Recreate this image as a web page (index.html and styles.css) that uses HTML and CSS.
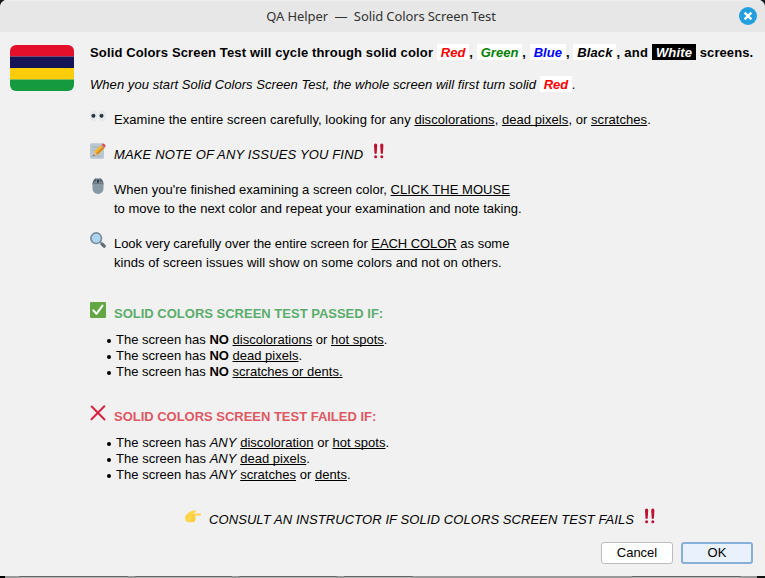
FILE: index.html
```html
<!DOCTYPE html>
<html lang="en">
<head>
<meta charset="utf-8">
<title>QA Helper — Solid Colors Screen Test</title>
<link rel="stylesheet" href="styles.css">
</head>
<body>
<svg class="defs" width="0" height="0" aria-hidden="true">
  <symbol id="bangs" viewBox="0 0 16 16"><path fill="#bb1133" d="M3 2.2Q3 .5 4.6.5T6.2 2.2L5.7 10.2Q5.5 11 4.6 11T3.5 10.2ZM9.2 2.2Q9.2.5 10.8.5T12.4 2.2L11.9 10.2Q11.7 11 10.8 11T9.7 10.2Z"/><circle cx="4.6" cy="13.8" r="1.5" fill="#bb1133"/><circle cx="10.8" cy="13.8" r="1.5" fill="#bb1133"/></symbol>
</svg>
<main class="dialog">
  <header class="titlebar">
    <h1>QA Helper &nbsp;—&nbsp; Solid Colors Screen Test</h1>
    <svg class="close" viewBox="0 0 18 18"><circle cx="9" cy="9" r="9" fill="#229fdd"/><path d="M5.6 5.6l6.8 6.8M12.4 5.6l-6.8 6.8" stroke="#fff" stroke-width="2.4"/></svg>
  </header>
  <div class="content">
    <svg class="flag" viewBox="0 0 64 46"><defs><clipPath id="round"><rect width="64" height="46" rx="6"/></clipPath></defs><g clip-path="url(#round)"><path fill="#e30f2b" d="M0 0h64v11.5H0z"/><path fill="#151456" d="M0 11.5h64V23H0z"/><path fill="#ffcd0a" d="M0 23h64v11.5H0z"/><path fill="#169a40" d="M0 34.5h64V46H0z"/></g></svg>
    <div class="message">
      <p class="lead"><span class="t-lead">Solid Colors Screen Test will cycle through solid color</span> <i class="chip red">Red</i>, <i class="chip green">Green</i>, <i class="chip blue">Blue</i>, <i class="chip black">Black</i><span class="t-and">, and </span><i class="chip white">White</i> screens.</p>
      <p class="start"><span class="t-start">When you start Solid Colors Screen Test, the whole screen will first turn solid</span> <b class="chip red">Red</b>.</p>
      <div class="row single">
        <svg class="icon" viewBox="0 0 16 16"><ellipse cx="3.8" cy="8" rx="3.7" ry="5.8" fill="#e5e9eb"/><ellipse cx="12.2" cy="8" rx="3.7" ry="5.8" fill="#e5e9eb"/><circle cx="3.4" cy="7.8" r="2" fill="#202a33"/><circle cx="11.5" cy="7.8" r="2" fill="#202a33"/><path d="M2.7 6.8h.7M10.8 6.8h.7" stroke="#a6afb5"/></svg>
        <p class="t-exam">Examine the entire screen carefully, looking for any <u>discolorations</u>, <u>dead pixels</u>, or <u>scratches</u>.</p>
      </div>
      <div class="row single">
        <svg class="icon" viewBox="0 0 16 16"><rect y=".3" width="14" height="15.4" rx="1.5" fill="#b9c7d0"/><path d="M2 4h7M2 7h5M2 13h9" stroke="#a3b3be" stroke-width=".8"/><path fill="#fbb62d" d="M4.2 8.4l7-6.5 3.2 3.2-6.9 6.9z"/><path fill="#d58c24" d="M6 10.2l7-6.7 1.4 1.6-6.9 6.9z"/><path fill="#e4bb91" d="M4.2 8.4l3.3 3.6-4.3 1z"/><path fill="#2e3439" d="M3.7 11.4l1.2 1.2-1.7.5z"/><path stroke="#8da0ad" stroke-width="1" d="M11.1 2.1l3.1 3"/><path fill="#e64b5d" d="M11.7 1.7L13 .5c.6-.4 3 1.8 2.8 2.6l-1.3 1.6z"/></svg>
        <p class="t-note"><i>MAKE NOTE OF ANY ISSUES YOU FIND</i></p>
        <svg class="icon bang"><use href="#bangs"/></svg>
      </div>
      <div class="row double">
        <svg class="icon" viewBox="0 0 16 16"><path fill="#8899a6" d="M2.5 5C3.2 1.5 5 .2 8 .2S12.8 1.5 13.5 5v5c0 3.8-2.2 5.9-5.5 5.9S2.5 13.8 2.5 10z"/><path fill="#5a6872" d="M2.8 4.4C3.4 1.8 4.7.5 6.4.3v3.5Q4.2 4 2.5 5.3zM13.2 4.4C12.6 1.8 11.3.5 9.6.3v3.5q2.2.2 3.9 1.5z"/><rect x="7.1" y="1.3" width="1.8" height="4.2" rx=".9" fill="#293137"/><path d="M2.5 6Q8 4 13.5 6" stroke="#65737e" fill="none"/></svg>
        <p><span class="t-mouse">When you're finished examining a screen color, <u>CLICK THE MOUSE</u></span><br><span class="t-move">to move to the next color and repeat your examination and note taking.</span></p>
      </div>
      <div class="row double">
        <svg class="icon" viewBox="0 0 16 16"><path stroke="#5c6b76" stroke-width="3.2" stroke-linecap="round" d="M12 12l2.2 2.2"/><path stroke="#8899a6" stroke-width="2" d="M9.5 9.5l2 2"/><circle cx="6.2" cy="6.2" r="5.3" fill="#acd4f2" stroke="#78899a" stroke-width="1.6"/></svg>
        <p><span class="t-look">Look very carefully over the entire screen for <u>EACH COLOR</u></span> as some<br><span class="t-kinds">kinds of screen issues will show on some colors and not on others.</span></p>
      </div>
      <section class="verdict passed">
        <div class="row single">
          <svg class="icon" viewBox="0 0 16 16"><rect width="16" height="16" rx="1.3" fill="#63a744"/><path d="M3.3 8.4l3.2 3.4L12.5 3.6" stroke="#fff" stroke-width="2" stroke-linecap="round" stroke-linejoin="round" fill="none"/></svg>
          <h2 class="t-pass">SOLID COLORS SCREEN TEST PASSED IF:</h2>
        </div>
        <ul>
          <li>The screen has <b>NO</b> <u>discolorations</u> or <u>hot spots</u>.</li>
          <li>The screen has <b>NO</b> <u>dead pixels</u>.</li>
          <li>The screen has <b>NO</b> <u>scratches or dents.</u></li>
        </ul>
      </section>
      <section class="verdict failed">
        <div class="row single">
          <svg class="icon" viewBox="0 0 16 16"><path d="M1.7 1.5l12.8 13M14.3 1.3L1.5 14.3" stroke="#d72342" stroke-width="2" stroke-linecap="round"/></svg>
          <h2 class="t-fail">SOLID COLORS SCREEN TEST FAILED IF:</h2>
        </div>
        <ul>
          <li>The screen has <i>ANY</i> <u>discoloration</u> or <u>hot spots</u>.</li>
          <li>The screen has <i>ANY</i> <u>dead pixels</u>.</li>
          <li>The screen has <i>ANY</i> <u>scratches</u> or <u>dents</u>.</li>
        </ul>
      </section>
      <div class="row single consult">
        <svg class="icon hand" viewBox="0 0 16 16"><path fill="#ffd54b" d="M1 5.2C3 3 6 .8 9.2.3c1.8-.3 2.3 1.5.7 2.2L8 3.6h7.1c1.2 0 1.2 2 0 2H9.7c1.2.3 1.4 1.7.6 2.3.8.8.5 2-.3 2.4.2 1-.5 2-1.6 2H4.3C1.5 12.3 0 10.6 0 8.5 0 7 .2 6 1 5.2z"/><path d="M6.3 5.5h3.4M6.5 8h3.5M6.5 10.3h3" stroke="#eeb93b" stroke-width=".6"/></svg>
        <p class="t-consult"><i>CONSULT AN INSTRUCTOR IF SOLID COLORS SCREEN TEST FAILS</i></p>
        <svg class="icon bang"><use href="#bangs"/></svg>
      </div>
    </div>
  </div>
  <footer class="actions"><button>Cancel</button><button class="primary">OK</button></footer>
</main>
<div class="taskbar"><span></span><span></span><span></span><span></span><span></span></div>
</body>
</html>
```
FILE: styles.css
```css
* { box-sizing: border-box; }
body { margin: 0; width: 765px; height: 578px; overflow: hidden; background: #14181c; font: 13px/16px "Liberation Sans", Arial, sans-serif; color: #000; }
.defs { position: absolute; }
p, h1, h2, ul { margin: 0; padding: 0; font: inherit; }
u { text-underline-offset: 1px; text-decoration-thickness: 1px; text-decoration-skip-ink: none; }
.dialog { height: 576px; background: #f1f1f1; border-radius: 7px 7px 0 0; overflow: hidden; }
.titlebar { display: grid; grid-template-columns: 1fr auto 1fr; align-items: center; height: 32px; padding: 0 8px 0 5px; background: #e7e7e7; border-top: 1px solid #eee; }
.titlebar h1 { grid-column: 2; padding-bottom: 2px; font: 13px/16px "Noto Sans", sans-serif; letter-spacing: -.11px; color: #333; white-space: nowrap; }
.close { width: 18px; height: 18px; justify-self: end; margin-top: -1px; }
.content { display: flex; gap: 16px; padding: 12px 0 0 10px; height: 510px; }
.flag { width: 64px; height: 46px; margin-top: 1px; flex: none; }
.message { width: 675px; white-space: nowrap; }
.lead { height: 17px; font-weight: bold; letter-spacing: .08px; }
.start { height: 17px; margin-top: 15px; font-style: italic; }
.chip { display: inline-block; background: #fff; padding: 1px 4px 0; line-height: 15px; letter-spacing: 0; }
.red { color: #f00; }
.green { color: #008000; }
.blue { color: #00f; }
.black { color: #000; }
.lead .black { letter-spacing: .1px; }
.white { color: #fff; background: #000; letter-spacing: .15px; }
.t-lead { letter-spacing: .135px; }
.t-and { letter-spacing: .25px; }
.t-start { letter-spacing: .055px; }
.t-exam { letter-spacing: .055px; }
.t-note { letter-spacing: .15px; }
.t-mouse { letter-spacing: .02px; }
.t-move { letter-spacing: .01px; }
.t-look { letter-spacing: -.06px; }
.t-kinds { letter-spacing: .06px; }
.t-fail { letter-spacing: -.02px; }
.t-consult { letter-spacing: .085px; }
.row { display: flex; gap: 8px; }
.icon { width: 16px; height: 16px; flex: none; margin-top: -4px; }
.single { margin-top: 19px; }
.double { margin-top: 17px; line-height: 19px; }
.double + .double { margin-top: 16px; }
.double .icon { margin-top: -2px; }
.verdict { margin-top: 34px; }
.failed { margin-top: 29px; }
.verdict .single { margin-top: 0; }
h2 { font-weight: bold; }
.passed h2 { color: #5aad6b; }
.failed h2 { color: #df5763; }
ul { margin-top: 10px; padding-left: 26px; list-style: none; letter-spacing: .01px; }
.failed ul { letter-spacing: .03px; }
li::before { content: ""; display: inline-block; width: 4px; height: 4px; margin: 0 5px 1px -9px; border-radius: 50%; background: #000; }
.consult { margin-top: 29px; padding-left: 95px; }
.consult .hand { margin-top: -2px; }
.actions { display: flex; justify-content: flex-end; gap: 8px; padding-right: 12px; }
button { width: 72px; height: 22px; padding: 0; border: 1px solid #bcbcbc; border-radius: 3px; background: #fff; color: #000; font: inherit; }
.primary { border: 2px solid #87afda; background: #e9f2fc; }
.taskbar { display: grid; grid-template-columns: 109px 97px 98px 69px 109px; column-gap: 7px; height: 2px; padding-left: 14px; background: #999; border-left: 5px solid #000; border-right: 8px solid #111; }
.taskbar span { background: #b4b4b4; border-top: 1px solid #666; }
.taskbar span:last-child { margin-left: 212px; width: 109px; }
```
